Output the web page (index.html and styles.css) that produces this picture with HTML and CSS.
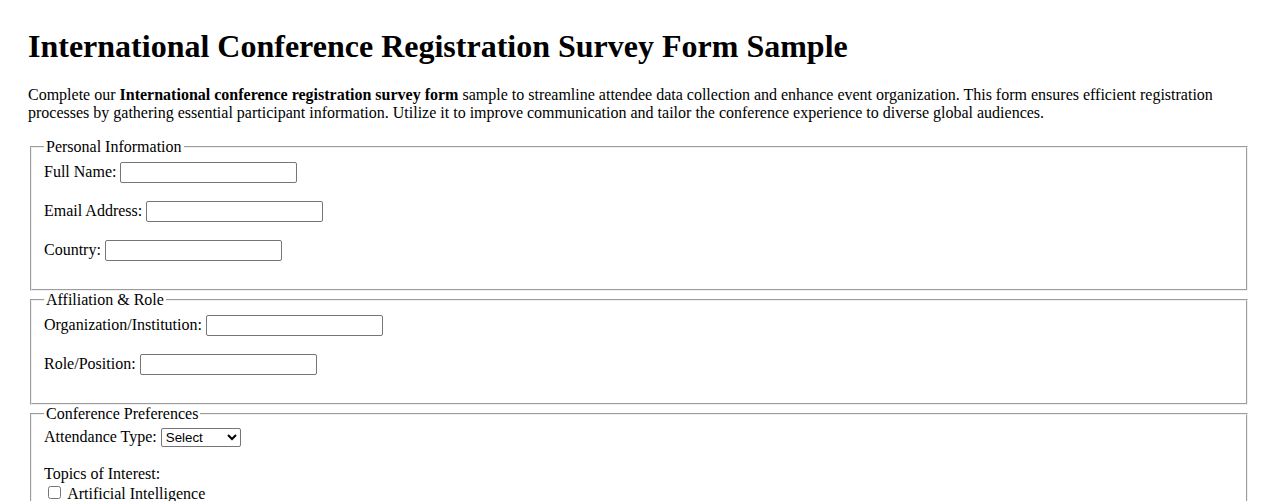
FILE: index.html
```html
<!DOCTYPE html>
<html lang="en">
<head>
<meta charset="utf-8">
<title>International Conference Registration Survey Form Sample</title>
<link rel="stylesheet" href="styles.css">
</head>
<body class="page">
<h1 class="title">International Conference Registration Survey Form Sample</h1>
<p class="intro">Complete our <strong>International conference registration survey form</strong> sample to streamline attendee data collection and enhance event organization. This form ensures efficient registration processes by gathering essential participant information. Utilize it to improve communication and tailor the conference experience to diverse global audiences.</p>
<form class="survey">
<fieldset class="group">
<legend class="group-title">Personal Information</legend>
<label for="fullname">Full Name:</label> <input class="field" type="text" id="fullname"><br><br>
<label for="email">Email Address:</label> <input class="field" type="email" id="email"><br><br>
<label for="country">Country:</label> <input class="field" type="text" id="country"><br><br>
</fieldset>
<fieldset class="group">
<legend class="group-title">Affiliation &amp; Role</legend>
<label for="org">Organization/Institution:</label> <input class="field" type="text" id="org"><br><br>
<label for="role">Role/Position:</label> <input class="field" type="text" id="role"><br><br>
</fieldset>
<fieldset class="group">
<legend class="group-title">Conference Preferences</legend>
<label for="attendance">Attendance Type:</label> <select class="picker" id="attendance">
<option>Select</option>
<option>In-Person</option>
<option>Virtual</option>
</select><br><br>
<label>Topics of Interest:</label><br>
<input class="check" type="checkbox" id="ai"> <label for="ai">Artificial Intelligence</label><br>
<input class="check" type="checkbox" id="climate"> <label for="climate">Climate Change</label><br>
<input class="check" type="checkbox" id="health"> <label for="health">Global Health</label><br>
</fieldset>
</form>
</body>
</html>
```
FILE: styles.css
```css
html, body {
  background: #ffffff;
}
.page {
  margin: 0;
  padding: 28px;
  font-family: "Liberation Serif", "Times New Roman", serif;
  font-size: 16px;
  color: #000000;
}
.title {
  font-size: 32px;
  font-weight: bold;
  margin: 0 0 21.44px 0;
}
.intro {
  margin: 0 0 16px 0;
}
.survey {
  margin: 0;
}
.group {
  margin: 0 2px;
  padding: 0.35em 0.75em 0.625em;
  border: 2px groove #f0f0f0;
}
.group-title {
  padding: 0 2px;
}
.field {
  box-sizing: border-box;
  width: 177px;
  height: 21px;
  font-family: "Liberation Sans", Arial, sans-serif;
  font-size: 13.333px;
  padding: 1px 2px;
  border: 1px solid #767676;
  border-radius: 2px;
  margin: 0;
  vertical-align: baseline;
}
.picker {
  box-sizing: border-box;
  width: 80px;
  font-family: "Liberation Sans", Arial, sans-serif;
  font-size: 13.333px;
  border: 1px solid #767676;
  border-radius: 2px;
  margin: 0;
  background: #ffffff;
  color: #000000;
}
.check {
  width: 13px;
  height: 13px;
  margin: 3px 3px 3px 4px;
}
```
